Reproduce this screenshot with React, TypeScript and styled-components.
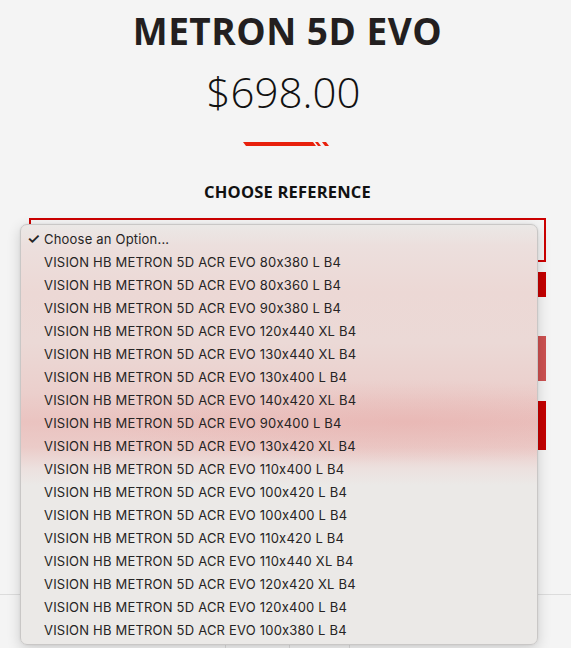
import styled, { createGlobalStyle } from "styled-components";

const GlobalStyle = createGlobalStyle`
  html, body {
    margin: 0;
    padding: 0;
    background: #f4f4f4;
  }
  body {
    font-family: "Open Sans", "Liberation Sans", sans-serif;
    color: #231f20;
  }
`;

const Page = styled.div`
  position: relative;
  width: 571px;
  height: 648px;
  overflow: hidden;
  display: flex;
  flex-direction: column;
`;

const Product = styled.div`
  display: flex;
  flex-direction: column;
  align-items: stretch;
  padding: 7px 25px 0 29px;
`;

const Title = styled.h1`
  margin: 0;
  text-align: center;
  font-size: 37px;
  line-height: 48px;
  font-weight: 700;
  letter-spacing: 0.5px;
  color: #231f20;
`;

const Price = styled.div`
  margin-top: 10px;
  padding-right: 8px;
  text-align: center;
  font-size: 42px;
  line-height: 54px;
  font-weight: 300;
  color: #111;
`;

const Divider = styled.div`
  margin-top: 23px;
  display: flex;
  justify-content: center;
  height: 4px;
`;

const Label = styled.div`
  margin-top: 35px;
  text-align: center;
  font-size: 16.5px;
  line-height: 22px;
  font-weight: 700;
  letter-spacing: 0.2px;
  color: #111;
`;

const SelectBox = styled.div`
  margin-top: 15px;
  height: 40px;
  border: 2px solid #cc0000;
`;

const Block = styled.div<{ $h: number; $top: number; $faded?: boolean }>`
  margin-top: ${(p) => p.$top}px;
  height: ${(p) => p.$h}px;
  background: ${(p) => (p.$faded ? "#cc5151" : "#c40000")};
`;

const Tabs = styled.div`
  margin-top: auto;
  height: 53px;
  border-top: 1px solid #dcdcdc;
  display: grid;
  grid-template-columns: 226px 64px 60px 1fr;
`;

const Tab = styled.div`
  border-right: 1px solid #dcdcdc;
  &:last-child {
    border-right: none;
  }
`;

const Menu = styled.div`
  position: absolute;
  left: 20px;
  top: 224px;
  width: 518px;
  height: 421px;
  padding-top: 2px;
  box-sizing: border-box;
  border: 1px solid #c9c7c6;
  border-radius: 7px;
  box-shadow: 0 4px 14px rgba(0, 0, 0, 0.16), 0 0 2px rgba(0, 0, 0, 0.1);
  background:
    radial-gradient(ellipse 60% 10% at 75% 47%, rgba(232, 175, 172, 0.5), rgba(232, 175, 172, 0) 100%),
    linear-gradient(
      to bottom,
      #ebe8e6 0%,
      #ecdfdd 5%,
      #ecd8d5 16%,
      #ebd9d6 28%,
      #ebcfcc 40%,
      #eac3c0 47%,
      #ebcbc8 53%,
      #ece0de 58%,
      #ebe9e7 62%,
      #ebe9e7 100%
    );
  font-family: Inter, "Liberation Sans", sans-serif;
  font-size: 13px;
  letter-spacing: 0.2px;
  font-feature-settings: "calt" 0;
  color: #262424;
`;

const Row = styled.div`
  height: 23px;
  display: flex;
  align-items: center;
  padding-left: 23px;
  white-space: nowrap;
  position: relative;
`;

const Check = styled.span`
  position: absolute;
  left: 6px;
  font-size: 15px;
  font-weight: 600;
`;

const options = [
  "VISION HB METRON 5D ACR EVO 80x380 L B4",
  "VISION HB METRON 5D ACR EVO 80x360 L B4",
  "VISION HB METRON 5D ACR EVO 90x380 L B4",
  "VISION HB METRON 5D ACR EVO 120x440 XL B4",
  "VISION HB METRON 5D ACR EVO 130x440 XL B4",
  "VISION HB METRON 5D ACR EVO 130x400 L B4",
  "VISION HB METRON 5D ACR EVO 140x420 XL B4",
  "VISION HB METRON 5D ACR EVO 90x400 L B4",
  "VISION HB METRON 5D ACR EVO 130x420 XL B4",
  "VISION HB METRON 5D ACR EVO 110x400 L B4",
  "VISION HB METRON 5D ACR EVO 100x420 L B4",
  "VISION HB METRON 5D ACR EVO 100x400 L B4",
  "VISION HB METRON 5D ACR EVO 110x420 L B4",
  "VISION HB METRON 5D ACR EVO 110x440 XL B4",
  "VISION HB METRON 5D ACR EVO 120x420 XL B4",
  "VISION HB METRON 5D ACR EVO 120x400 L B4",
  "VISION HB METRON 5D ACR EVO 100x380 L B4",
];

export default function App() {
  return (
    <>
      <GlobalStyle />
      <Page>
        <Product>
          <Title>METRON 5D EVO</Title>
          <Price>$698.00</Price>
          <Divider>
            <svg width="90" height="4" viewBox="0 0 90 4">
              <polygon points="0,0 70,0 73,4 3,4" fill="#e8200c" />
              <polygon points="72,0 75,0 78,4 75,4" fill="#e8200c" />
              <polygon points="79,0 83,0 86,4 82,4" fill="#e8200c" />
            </svg>
          </Divider>
          <Label>CHOOSE REFERENCE</Label>
          <SelectBox />
          <Block $top={10} $h={25} />
          <Block $top={39} $h={45} $faded />
          <Block $top={20} $h={49} />
        </Product>
        <Tabs>
          <Tab />
          <Tab />
          <Tab />
          <Tab />
        </Tabs>
        <Menu>
          <Row>
            <Check>✓</Check>
            Choose an Option...
          </Row>
          {options.map((o) => (
            <Row key={o}>{o}</Row>
          ))}
        </Menu>
      </Page>
    </>
  );
}
